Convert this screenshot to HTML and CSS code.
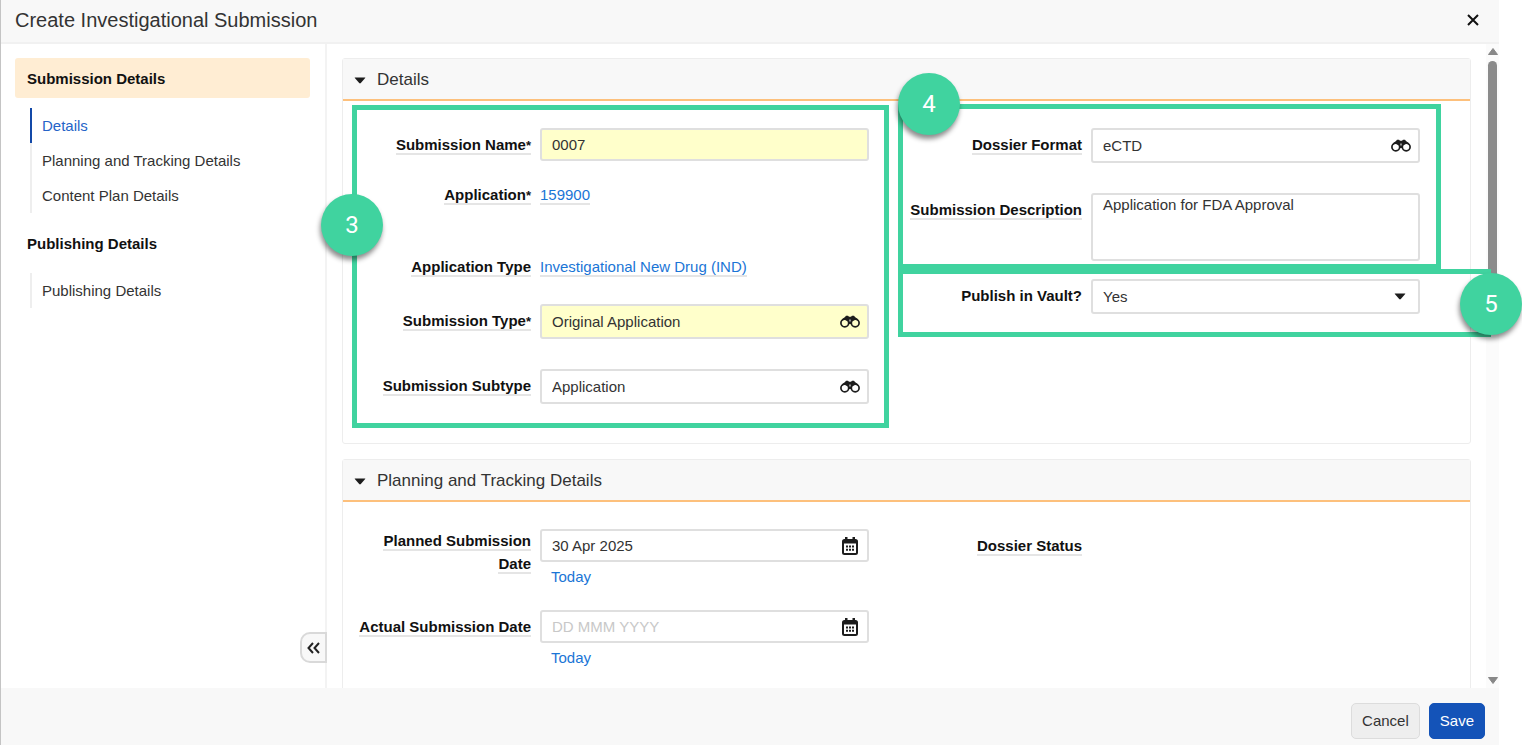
FILE: index.html
```html
<!DOCTYPE html>
<html lang="en">
<head>
<meta charset="utf-8">
<title>Create Investigational Submission</title>
<link rel="stylesheet" href="styles.css">
</head>
<body>
<svg class="defs" aria-hidden="true">
  <symbol id="binoculars" viewBox="0 0 20 14">
    <path d="M1 6.500Q2.500 3 5 2L6 .8h2L9 1.800h2L12 .8h2L15 2q2.500 1 4 4.500L15.500 4.500 12 6.500 11.200 9H8.800L8 6.500 4.500 4.500Z" fill="#1d1d1d"/>
    <circle cx="4.800" cy="8" r="3.900" fill="none" stroke="#1d1d1d" stroke-width="1.700"/>
    <circle cx="15.200" cy="8" r="3.900" fill="none" stroke="#1d1d1d" stroke-width="1.700"/>
    <path d="M9.500 4.500h1v2h-1z" fill="#fff"/>
  </symbol>
  <symbol id="calendar" viewBox="0 0 16 18">
    <path d="M3 0h2.500v3H3zM10.500 0H13v3h-2.500z" fill="#1d1d1d"/>
    <rect x="1" y="3" width="14" height="14" rx="1.500" fill="none" stroke="#1d1d1d" stroke-width="2"/>
    <path d="M1 3h14v3.500H1z" fill="#1d1d1d"/>
    <path d="M4 8.500h2v2H4zM7 8.500h2v2H7zM10 8.500h2v2h-2zM4 11.700h2v2H4zM7 11.700h2v2H7zM10 11.700h2v2h-2z" fill="#1d1d1d"/>
  </symbol>
  <symbol id="caret" viewBox="0 0 12 7">
    <path d="M1 .5h10q.7 0 .2.600L6.800 6q-.8.800-1.600 0L.8 1.100Q.3.500 1 .5Z" fill="#1d1d1d"/>
  </symbol>
</svg>

<div class="dialog" role="dialog" aria-labelledby="title">
  <header class="dialog-header">
    <h1 id="title">Create Investigational Submission</h1>
    <button class="close" type="button" aria-label="Close">
      <svg width="12" height="12" viewBox="0 0 12 12"><path d="M1 1l10 10M11 1L1 11" stroke="#111" stroke-width="2"/></svg>
    </button>
  </header>

  <div class="dialog-body">
    <nav class="sidebar">
      <h2 class="nav-heading active">Submission Details</h2>
      <ul>
        <li><a class="current" href="#details">Details</a></li>
        <li><a href="#planning">Planning and Tracking Details</a></li>
        <li><a href="#content">Content Plan Details</a></li>
      </ul>
      <h2 class="nav-heading">Publishing Details</h2>
      <ul>
        <li><a href="#publishing">Publishing Details</a></li>
      </ul>
      <button class="collapse" type="button" aria-label="Collapse sidebar">
        <svg width="13" height="12" viewBox="0 0 13 12"><path d="M6 1 1.500 6 6 11M12 1 7.500 6 12 11" fill="none" stroke="#222" stroke-width="2"/></svg>
      </button>
    </nav>

    <main class="content">
      <section class="panel" id="details">
        <h2 class="panel-title"><svg class="caret"><use href="#caret"/></svg>Details</h2>
        <div class="form">
          <div class="column marked">
            <div class="row space-short">
              <label for="name"><span class="hint">Submission Name<span class="star">*</span></span></label>
              <div class="field required"><input id="name" type="text" value="0007"></div>
            </div>
            <div class="row space-wide">
              <span class="label"><span class="hint">Application<span class="star">*</span></span></span>
              <div class="value"><a class="hint" href="#app">159900</a></div>
            </div>
            <div class="row space-type">
              <span class="label"><span class="hint">Application Type</span></span>
              <div class="value"><a class="hint" href="#type">Investigational New Drug (IND)</a></div>
            </div>
            <div class="row space-field">
              <label for="stype"><span class="hint">Submission Type<span class="star">*</span></span></label>
              <div class="field tall required"><input id="stype" type="text" value="Original Application"><button type="button" aria-label="Find type"><svg class="find"><use href="#binoculars"/></svg></button></div>
            </div>
            <div class="row">
              <label for="subtype"><span class="hint">Submission Subtype</span></label>
              <div class="field tall"><input id="subtype" type="text" value="Application"><button type="button" aria-label="Find subtype"><svg class="find"><use href="#binoculars"/></svg></button></div>
            </div>
            <div class="mark mark-three"><span class="step">3</span></div>
          </div>

          <div class="column">
            <div class="marked">
              <div class="row space-field">
                <label for="format"><span class="hint">Dossier Format</span></label>
                <div class="field tall"><input id="format" type="text" value="eCTD"><button type="button" aria-label="Find format"><svg class="find"><use href="#binoculars"/></svg></button></div>
              </div>
              <div class="row">
                <label for="desc"><span class="hint">Submission Description</span></label>
                <textarea id="desc">Application for FDA Approval</textarea>
              </div>
              <div class="mark mark-four"><span class="step">4</span></div>
            </div>
            <div class="marked publish">
              <div class="row">
                <label for="publish">Publish in Vault?</label>
                <div class="field tall"><select id="publish"><option>Yes</option><option>No</option></select><svg class="caret"><use href="#caret"/></svg></div>
              </div>
              <div class="mark mark-five"><span class="step">5</span></div>
            </div>
          </div>
        </div>
      </section>

      <section class="panel" id="planning">
        <h2 class="panel-title"><svg class="caret"><use href="#caret"/></svg>Planning and Tracking Details</h2>
        <div class="form">
          <div class="column">
            <div class="row space-date">
              <label class="two-line" for="planned"><span class="hint">Planned Submission Date</span></label>
              <div>
                <div class="field"><input id="planned" type="text" value="30 Apr 2025"><button type="button" aria-label="Open calendar"><svg class="calendar"><use href="#calendar"/></svg></button></div>
                <a class="today" href="#today">Today</a>
              </div>
            </div>
            <div class="row">
              <label for="actual"><span class="hint">Actual Submission Date</span></label>
              <div>
                <div class="field"><input id="actual" type="text" placeholder="DD MMM YYYY"><button type="button" aria-label="Open calendar"><svg class="calendar"><use href="#calendar"/></svg></button></div>
                <a class="today" href="#today">Today</a>
              </div>
            </div>
          </div>
          <div class="column">
            <div class="row"><span class="label"><span class="hint">Dossier Status</span></span></div>
          </div>
        </div>
      </section>
    </main>

    <div class="scrollbar" aria-hidden="true">
      <svg width="10" height="7" viewBox="0 0 10 7"><path d="M5 0.500 9.500 6.500h-9z" fill="#888" stroke="#888" stroke-linejoin="round"/></svg>
      <div class="track"><div class="thumb"></div></div>
      <svg width="10" height="7" viewBox="0 0 10 7"><path d="M5 6.500 9.500.500h-9z" fill="#888" stroke="#888" stroke-linejoin="round"/></svg>
    </div>
  </div>

  <footer class="dialog-footer">
    <button class="button" type="button">Cancel</button>
    <button class="button primary" type="button">Save</button>
  </footer>
</div>
</body>
</html>
```
FILE: styles.css
```css
* { box-sizing: border-box; }

:root { --gutter: 23px; }

body {
  margin: 0;
  background: #fff;
  color: #333;
  font: 15px/23px "Liberation Sans", Arial, sans-serif;
}

h1, h2, ul { margin: 0; padding: 0; }
a { color: #1a75d6; text-decoration: none; }
button, input, select, textarea { font: inherit; color: inherit; }
button { cursor: pointer; }
.defs { display: none; }

.dialog {
  display: flex;
  flex-direction: column;
  height: 100vh;
  border-left: 1px solid #c4c4c4;
}

.dialog-header {
  display: flex;
  align-items: center;
  justify-content: space-between;
  margin-right: var(--gutter);
  padding: 8px 20px 10px 14px;
  background: #f8f8f8;
  border-bottom: 2px solid #f1f1f1;
}
.dialog-header h1 { font-size: 20px; font-weight: 400; line-height: 24px; }
.close { display: flex; padding: 0; border: 0; background: none; }

.dialog-body {
  display: grid;
  grid-template: minmax(0, 1fr) / 326px minmax(0, 1fr) 13px;
  flex: 1;
  min-height: 0;
  padding-right: var(--gutter);
  overflow: hidden;
}

.sidebar {
  position: relative;
  padding: 14px 15px 0 14px;
  border-right: 2px solid #f3f3f3;
}
.nav-heading {
  padding: 9px 12px 8px;
  color: #111;
  font-size: 15px;
  line-height: 23px;
}
.nav-heading.active { background: #ffedd3; border-radius: 3px; }
.sidebar ul { margin: 10px 0 10px 15px; list-style: none; }
.sidebar li a {
  display: block;
  padding: 6px 0 6px 10px;
  border-left: 2px solid #eee;
  color: #333;
}
.sidebar li a.current { border-color: #1349a8; color: #2564c8; }

.collapse {
  position: absolute;
  right: -2px;
  bottom: 25px;
  display: flex;
  align-items: center;
  justify-content: center;
  width: 27px;
  height: 31px;
  padding: 0;
  border: 2px solid #d9d9d9;
  border-radius: 10px 0 0 10px;
  background: #f8f8f8;
}

.content { padding: 14px 15px 0; }
.panel {
  margin-bottom: 15px;
  border: 1px solid #ededed;
  border-radius: 3px;
}
.panel-title {
  display: flex;
  align-items: center;
  gap: 11px;
  padding: 9px 11px 7px;
  background: #f8f8f8;
  border-bottom: 2px solid #fdc07c;
  font-size: 17px;
  font-weight: 400;
  line-height: 24px;
}
.caret { width: 12px; height: 7px; }

.form {
  display: grid;
  grid-template-columns: 1fr 1fr;
  gap: 33px;
  padding: 27px 50px 39px 8px;
}
.row {
  display: grid;
  grid-template-columns: 180px 1fr;
  gap: 9px;
  align-items: start;
}
.space-short { margin-bottom: 17px; }
.space-wide { margin-bottom: 43px; }
.space-type { margin-bottom: 26px; }
.space-field { margin-bottom: 30px; }
.space-date { margin-bottom: 20px; }

label, .label {
  padding-top: 5px;
  color: #111;
  font-weight: 700;
  text-align: right;
}
label.two-line { padding-top: 0; }
.hint { border-bottom: 2px solid #e5e5e5; }
.star { font-size: 13px; }
.value { padding-top: 5px; }

.field {
  display: flex;
  align-items: center;
  height: 33px;
  padding: 0 7px 0 10px;
  background: #fff;
  border: 2px solid #dfdfdf;
  border-radius: 3px;
}
.field.tall { height: 35px; }
.field.required { background: #ffffcb; }
.field input, .field select {
  flex: 1;
  min-width: 0;
  padding: 0;
  border: 0;
  outline: 0;
  background: none;
  appearance: none;
}
.field input::placeholder { color: #c8c8c8; opacity: 1; }
.field button { display: flex; padding: 0; border: 0; background: none; }
.field > .caret { margin-right: 5px; }
.find { width: 20px; height: 14px; }
.calendar { width: 16px; height: 18px; margin-right: 2px; }

textarea {
  display: block;
  width: 100%;
  height: 68px;
  padding: 0 10px;
  border: 2px solid #dfdfdf;
  border-radius: 3px;
  outline: 0;
  line-height: 19px;
  resize: none;
}
.today { display: block; padding: 3px 0 2px 11px; }
.publish { margin-top: 18px; }

/* Numbered step outlines */
.marked { position: relative; }
.mark {
  position: absolute;
  z-index: 1;
  border: 5px solid #40d39f;
  pointer-events: none;
}
.mark-three { inset: -23px -20px -24px 1px; }
.mark-four { inset: -24px -21px -8px -4px; }
.mark-five { inset: -10px -71px -23px -4px; border-right: 0; }
.step {
  position: absolute;
  display: flex;
  align-items: center;
  justify-content: center;
  width: 62px;
  height: 62px;
  border-radius: 50%;
  background: #40d39f;
  box-shadow: -1px 4px 5px rgba(0, 0, 0, 0.45);
  color: #fff;
  font: 400 24px/24px Roboto, sans-serif;
}
.mark-three .step { top: 84px; left: -36px; }
.mark-four .step { top: -36px; left: -5px; }
.mark-five .step { top: -1px; right: -31px; }

.scrollbar {
  display: flex;
  flex-direction: column;
  align-items: center;
  gap: 6px;
  padding: 4px 0;
  background: #fbfbfb;
}
.track { flex: 1; }
.thumb { width: 9px; height: 45%; border-radius: 5px; background: #8b8b8b; }
.track .thumb { height: 44%; }

.dialog-footer {
  display: flex;
  justify-content: flex-end;
  gap: 9px;
  margin-right: var(--gutter);
  padding: 15px 14px 6px;
  background: #f8f8f8;
}
.button {
  padding: 5px 10px 6px;
  border: 1px solid #dcdcdc;
  border-radius: 5px;
  background: #eee;
  line-height: 23px;
}
.button.primary { border-color: #1453b8; background: #1453b8; color: #fff; }
```
